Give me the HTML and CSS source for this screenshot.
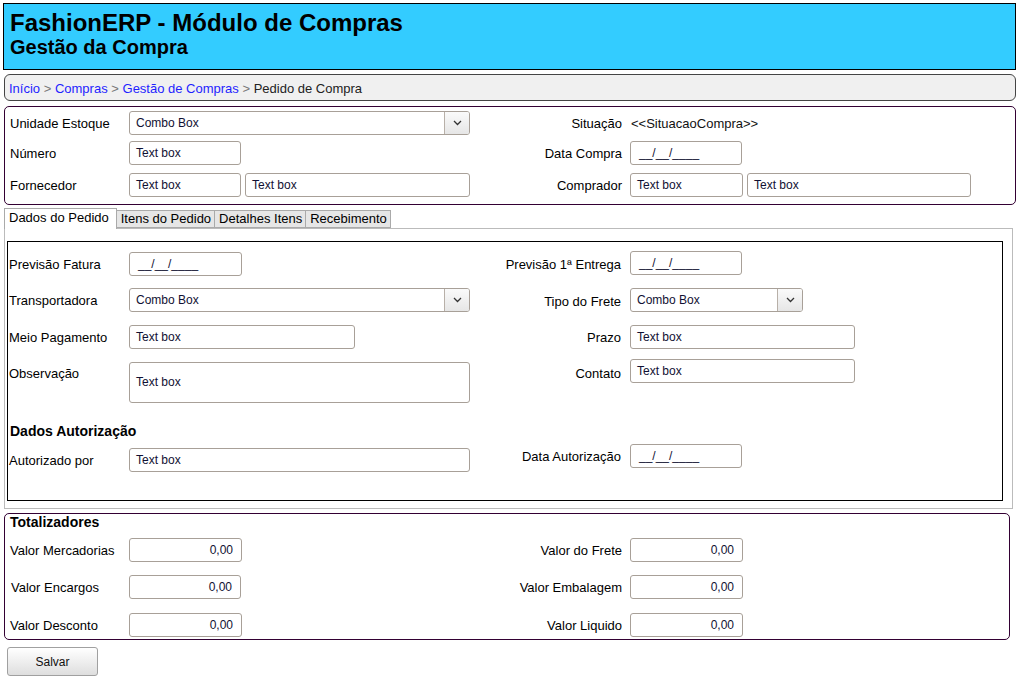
FILE: index.html
```html
<!DOCTYPE html>
<html lang="pt-BR">
<head>
<meta charset="utf-8">
<title>FashionERP - Módulo de Compras</title>
<link rel="stylesheet" href="styles.css">
</head>
<body>
<header class="header">
  <h1 class="title">FashionERP - Módulo de Compras</h1>
  <h2 class="subtitle">Gestão da Compra</h2>
</header>

<nav class="crumbs">
  <a href="#">Início</a> <span class="sep">&gt;</span> <a href="#">Compras</a> <span class="sep">&gt;</span> <a href="#">Gestão de Compras</a> <span class="sep">&gt;</span> <span class="cur">Pedido de Compra</span>
</nav>

<section class="panel top">
  <div class="frow r1">
    <span class="lbl">Unidade Estoque</span>
    <div class="cell"><div class="combo w341"><span>Combo Box</span><i class="arrow"><svg width="9" height="6" viewBox="0 0 9 6"><polyline points="1,1 4.5,4.5 8,1" fill="none" stroke="#333" stroke-width="1.3"/></svg></i></div></div>
    <span class="rlbl">Situação</span>
    <div class="rcell"><span class="val">&lt;&lt;SituacaoCompra&gt;&gt;</span></div>
  </div>
  <div class="frow r2">
    <span class="lbl">Número</span>
    <div class="cell"><div class="tb w112">Text box</div></div>
    <span class="rlbl">Data Compra</span>
    <div class="rcell"><div class="tb w112 date">__/__/____</div></div>
  </div>
  <div class="frow r3">
    <span class="lbl">Fornecedor</span>
    <div class="cell"><div class="tb w112">Text box</div><div class="tb w225">Text box</div></div>
    <span class="rlbl">Comprador</span>
    <div class="rcell"><div class="tb w113">Text box</div><div class="tb w224">Text box</div></div>
  </div>
</section>

<div class="tabs">
  <span class="tab active">Dados do Pedido</span>
  <span class="tab">Itens do Pedido</span>
  <span class="tab">Detalhes Itens</span>
  <span class="tab">Recebimento</span>
</div>
<section class="tabpanel">
  <div class="inner">
    <div class="frow2">
      <span class="lbl">Previsão Fatura</span>
      <div class="cell"><div class="tb w113 date">__/__/____</div></div>
      <span class="rlbl">Previsão 1ª Entrega</span>
      <div class="rcell up1"><div class="tb w112 date">__/__/____</div></div>
    </div>
    <div class="frow2">
      <span class="lbl">Transportadora</span>
      <div class="cell"><div class="combo w341"><span>Combo Box</span><i class="arrow"><svg width="9" height="6" viewBox="0 0 9 6"><polyline points="1,1 4.5,4.5 8,1" fill="none" stroke="#333" stroke-width="1.3"/></svg></i></div></div>
      <span class="rlbl lower">Tipo do Frete</span>
      <div class="rcell"><div class="combo w173"><span>Combo Box</span><i class="arrow"><svg width="9" height="6" viewBox="0 0 9 6"><polyline points="1,1 4.5,4.5 8,1" fill="none" stroke="#333" stroke-width="1.3"/></svg></i></div></div>
    </div>
    <div class="frow2">
      <span class="lbl">Meio Pagamento</span>
      <div class="cell"><div class="tb w226">Text box</div></div>
      <span class="rlbl">Prazo</span>
      <div class="rcell"><div class="tb w225">Text box</div></div>
    </div>
    <div class="frow2 tall">
      <span class="lbl toplbl">Observação</span>
      <div class="cell"><div class="ta w341">Text box</div></div>
      <span class="rlbl toplbl">Contato</span>
      <div class="rcell contato"><div class="tb w225">Text box</div></div>
    </div>
    <h3 class="section-title">Dados Autorização</h3>
    <div class="frow2">
      <span class="lbl">Autorizado por</span>
      <div class="cell"><div class="tb w341">Text box</div></div>
      <span class="rlbl shiftup">Data Autorização</span>
      <div class="rcell shiftup"><div class="tb w112 date">__/__/____</div></div>
    </div>
  </div>
</section>

<section class="panel totals">
  <h3 class="totals-title">Totalizadores</h3>
  <div class="frow t1">
    <span class="lbl">Valor Mercadorias</span>
    <div class="cell"><div class="tb w113 num">0,00</div></div>
    <span class="rlbl">Valor do Frete</span>
    <div class="rcell"><div class="tb w113 num">0,00</div></div>
  </div>
  <div class="frow t2">
    <span class="lbl ind">Valor Encargos</span>
    <div class="cell"><div class="tb w112 num">0,00</div></div>
    <span class="rlbl">Valor Embalagem</span>
    <div class="rcell"><div class="tb w113 num">0,00</div></div>
  </div>
  <div class="frow t3">
    <span class="lbl">Valor Desconto</span>
    <div class="cell"><div class="tb w113 num">0,00</div></div>
    <span class="rlbl">Valor Liquido</span>
    <div class="rcell"><div class="tb w113 num">0,00</div></div>
  </div>
</section>

<button class="btn" type="button">Salvar</button>
</body>
</html>
```

FILE: styles.css
```css
* { box-sizing: border-box; }

body {
  margin: 3px 3px 0 3px;
  font-family: "Liberation Sans", Arial, sans-serif;
  font-size: 13px;
  color: #000;
  background: #fff;
}

.header {
  background: #33ccff;
  border: 1px solid #000;
  padding: 5px 6px 12px 6px;
}
.title {
  margin: 0;
  font-size: 24px;
  line-height: 28px;
  font-weight: bold;
}
.subtitle {
  margin: 0;
  font-size: 20px;
  line-height: 20px;
  font-weight: bold;
}

.crumbs {
  margin: 4px 0 0 1px;
  height: 27px;
  border: 1px solid #444;
  border-radius: 6px;
  background: #f0f0f0;
  padding: 1px 4px 0 4px;
  line-height: 25px;
  font-size: 13px;
}
.crumbs a { color: #1f1fff; text-decoration: none; }
.crumbs .sep { color: #777; }
.crumbs .cur { color: #222; }

.panel {
  margin-left: 1px;
  border: 1px solid #330033;
  border-radius: 5px;
}
.panel.top {
  margin-top: 5px;
  padding: 4px 0 6px 5px;
  height: 99px;
}

.frow {
  display: grid;
  grid-template-columns: 119px 370px 123px 1fr;
  align-items: center;
  height: 24px;
}
.frow.r2 { margin-top: 6px; }
.frow.r3 { margin-top: 8px; }

.lbl { white-space: nowrap; }
.lbl.ind { padding-left: 1px; }
.rlbl { text-align: right; white-space: nowrap; }
.cell, .rcell { display: flex; gap: 4px; align-items: center; }
.rcell { padding-left: 8px; }
.val { font-size: 13px; padding-left: 1px; color: #111; }

.tb, .ta, .combo {
  height: 24px;
  border: 1px solid #a8a098;
  border-radius: 3px;
  background: #fff;
  font-size: 12px;
  color: #111133;
  padding: 0 6px;
  line-height: 22px;
  white-space: nowrap;
}
.tb.date { padding-left: 8px; }
.tb.num { text-align: right; padding-right: 8px; }
.ta { height: 41px; line-height: 39px; }

.combo {
  display: flex;
  justify-content: space-between;
  padding: 0 0 0 6px;
}
.combo .arrow {
  width: 25px;
  height: 22px;
  border-left: 1px solid #b8b0a8;
  border-radius: 0 2px 2px 0;
  background: linear-gradient(#fafafa, #e6e6e6);
  display: flex;
  align-items: center;
  justify-content: center;
}

.w112 { width: 112px; }
.w113 { width: 113px; }
.w173 { width: 173px; }
.w224 { width: 224px; }
.w225 { width: 225px; }
.w226 { width: 226px; }
.w341 { width: 341px; }

.tabs {
  margin: 3px 0 0 1px;
  height: 20px;
  display: flex;
  align-items: flex-end;
}
.tab {
  height: 18px;
  line-height: 16px;
  padding: 0 3px 0 4px;
  border: 1px solid #aaa;
  border-left: none;
  background: #e6e6e6;
  font-size: 13px;
  white-space: nowrap;
}
.tab.active {
  position: relative;
  z-index: 1;
  height: 21px;
  margin-bottom: -1px;
  border-left: 1px solid #aaa;
  border-bottom: none;
  background: #fff;
  padding: 0 7px 0 4px;
  line-height: 18px;
  align-self: flex-start;
}

.tabpanel {
  margin-left: 1px;
  width: 1009px;
  border: 1px solid #bbb;
  padding: 12px 0 7px 2px;
}
.inner {
  width: 996px;
  border: 1px solid #000;
  padding: 9px 0 32px 0;
}
.frow2 {
  display: grid;
  grid-template-columns: 121px 370px 122px 1fr;
  align-items: center;
  height: 24px;
  margin-bottom: 13px;
}
.frow2 .lbl { padding-left: 1px; }
.frow2 .rcell { padding-left: 9px; }
.frow2.tall { height: 41px; align-items: start; margin-bottom: 0; }
.toplbl { padding-top: 4px; }
.rcell.contato { margin-top: -3px; }
.rlbl.lower { padding-top: 2px; }
.up1 { margin-bottom: 2px; }
.shiftup { margin-bottom: 8px; }

.section-title {
  margin: 20px 0 4px 2px;
  font-size: 14px;
  line-height: 17px;
  font-weight: bold;
}
.frow2:last-child { margin-bottom: 0; }

.panel.totals {
  margin-top: 4px;
  width: 1006px;
  padding: 0 0 1px 5px;
  height: 127px;
}
.totals-title {
  margin: 0;
  font-size: 14px;
  line-height: 16px;
  font-weight: bold;
}
.frow.t1 { margin-top: 8px; }
.frow.t2 { margin-top: 13px; }
.frow.t3 { margin-top: 14px; }

.btn {
  display: block;
  margin: 7px 0 0 4px;
  width: 91px;
  height: 29px;
  border: 1px solid #a0a0a0;
  border-radius: 3px;
  background: linear-gradient(#ffffff, #dedede);
  font-family: "Liberation Sans", Arial, sans-serif;
  font-size: 12px;
  color: #111;
}
```
